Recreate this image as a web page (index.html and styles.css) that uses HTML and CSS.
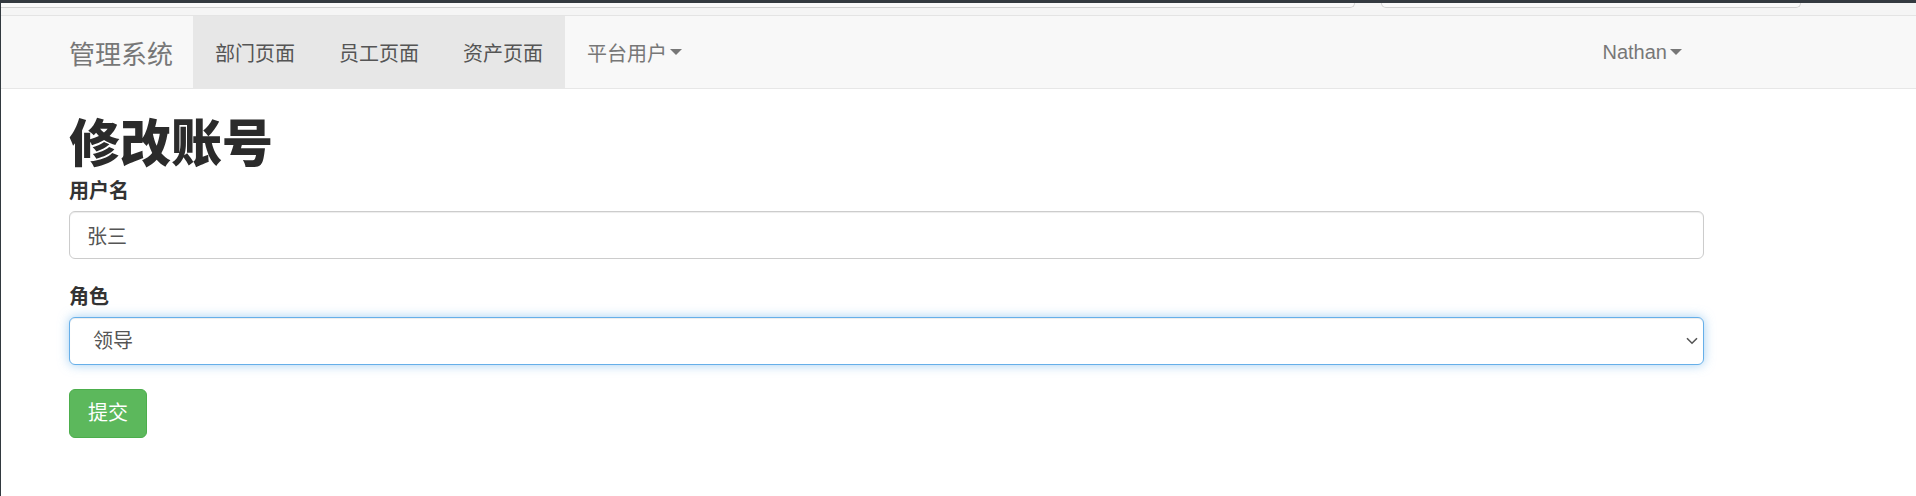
FILE: index.html
```html
<!DOCTYPE html>
<html lang="zh-CN">
<head>
<meta charset="utf-8">
<title>修改账号</title>
<link rel="stylesheet" href="styles.css">
</head>
<body>
<div class="chrome">
  <div class="tab tab-left"></div>
  <div class="tab tab-right"></div>
</div>
<nav class="navbar">
  <div class="container nav-inner">
    <a class="brand" href="#">管理系统</a>
    <ul class="nav">
      <li class="active"><a href="#">部门页面</a></li>
      <li class="active"><a href="#">员工页面</a></li>
      <li class="active"><a href="#">资产页面</a></li>
      <li><a href="#">平台用户<span class="caret"></span></a></li>
    </ul>
    <ul class="nav nav-right">
      <li><a href="#">Nathan<span class="caret"></span></a></li>
    </ul>
  </div>
</nav>
<main class="container">
  <h1 class="title">修改账号</h1>
  <form class="form">
    <div class="form-group">
      <label class="label" for="username">用户名</label>
      <input class="form-control" id="username" type="text" value="张三">
    </div>
    <div class="form-group">
      <label class="label" for="role">角色</label>
      <div class="select-wrap">
        <select class="form-control form-select is-focus" id="role">
          <option>领导</option>
        </select>
        <svg class="chevron" width="12" height="8" viewBox="0 0 12 8" aria-hidden="true">
          <path d="M1 1.2 L6 6.2 L11 1.2" fill="none" stroke="#555" stroke-width="1.6"/>
        </svg>
      </div>
    </div>
    <button class="btn btn-success" type="button">提交</button>
  </form>
</main>
</body>
</html>
```
FILE: styles.css
```css
* {
  box-sizing: border-box;
}

html,
body {
  margin: 0;
  height: 100%;
}

body {
  font-family: "Liberation Sans", "Noto Sans CJK SC", Arial, sans-serif;
  color: #333;
  background: #fff;
  border-left: 1px solid #32393f;
}

a {
  text-decoration: none;
}

/* browser chrome remnant at the very top */
.chrome {
  height: 15px;
  border-top: 3px solid #343a40;
  background: #f5f5f5;
  display: flex;
  align-items: flex-start;
}

.tab {
  height: 5px;
  background: #fafafa;
  border-bottom: 1px solid #d2d2d2;
}

.tab-left {
  width: 1354px;
  border-right: 1px solid #d2d2d2;
  border-bottom-right-radius: 12px;
}

.tab-right {
  margin-left: 26px;
  width: 420px;
  border-left: 1px solid #d2d2d2;
  border-right: 1px solid #d2d2d2;
  border-bottom-left-radius: 12px;
  border-bottom-right-radius: 12px;
}

/* navbar */
.navbar {
  background: #f8f8f8;
  border-top: 1px solid #e4e4e4;
  border-bottom: 1px solid #e7e7e7;
}

.container {
  width: 1635px;
  margin-left: 68px;
}

.nav-inner {
  display: flex;
  height: 72px;
}

.brand {
  display: flex;
  align-items: center;
  font-size: 26px;
  color: #777;
  padding-right: 20px;
}

.nav {
  list-style: none;
  margin: 0;
  padding: 0;
  display: flex;
}

.nav a {
  display: flex;
  align-items: center;
  height: 100%;
  padding: 0 22px;
  font-size: 20px;
  color: #777;
}

.nav .active a {
  background: #e7e7e7;
  color: #555;
}

.nav-right {
  margin-left: auto;
}

.caret {
  display: inline-block;
  width: 0;
  height: 0;
  margin-left: 3px;
  border-top: 6px solid #777;
  border-left: 6px solid transparent;
  border-right: 6px solid transparent;
}

/* content */
.title {
  font-size: 51px;
  line-height: 56px;
  font-weight: 900;
  margin: 28px 0 4px;
  color: #2b2b2b;
}

.form {
  margin: 0;
}

.form-group {
  margin-bottom: 24px;
}

.label {
  display: block;
  font-size: 20px;
  font-weight: bold;
  line-height: 28px;
  margin-bottom: 6px;
  color: #333;
}

.form-control {
  display: block;
  width: 100%;
  height: 48px;
  padding: 0 17px;
  font-family: inherit;
  font-size: 20px;
  color: #555;
  background: #fff;
  border: 1px solid #ccc;
  border-radius: 6px;
  box-shadow: inset 0 1px 1px rgba(0, 0, 0, 0.075);
  outline: 0;
}

.select-wrap {
  position: relative;
}

.form-select {
  appearance: none;
  -webkit-appearance: none;
  padding-left: 23px;
}

.is-focus {
  border-color: #66afe9;
  box-shadow: inset 0 1px 1px rgba(0, 0, 0, 0.075), 0 0 11px rgba(102, 175, 233, 0.6);
}

.chevron {
  position: absolute;
  right: 6px;
  top: 20px;
}

.btn {
  display: inline-block;
  height: 49px;
  padding: 0 18px;
  font-family: inherit;
  font-size: 20px;
  line-height: 47px;
  border-radius: 6px;
  cursor: pointer;
}

.btn-success {
  color: #fff;
  background: #5cb85c;
  border: 1px solid #4cae4c;
}
```
